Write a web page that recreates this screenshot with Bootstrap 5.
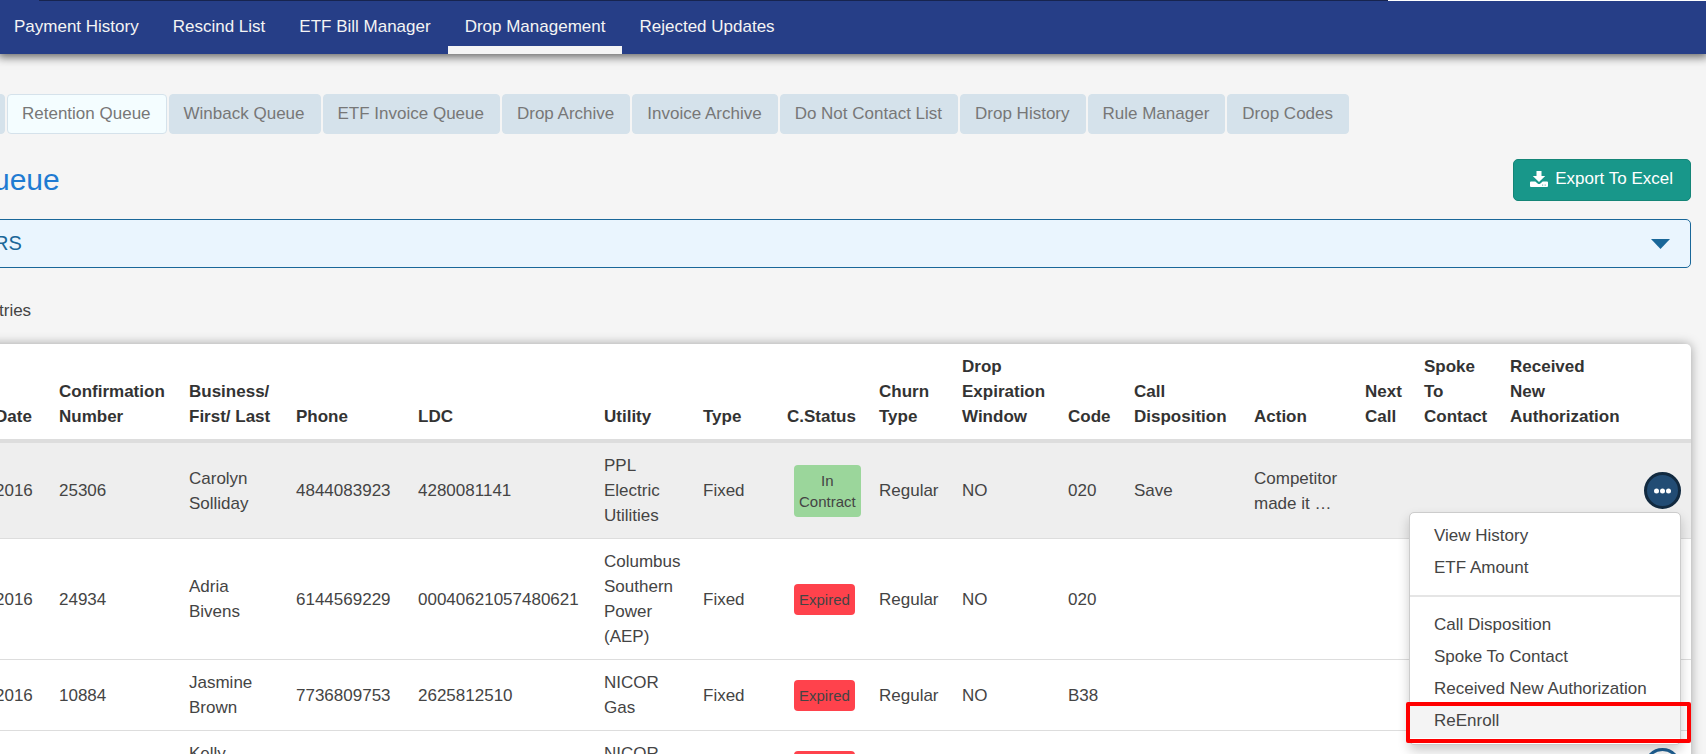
<!DOCTYPE html>
<html lang="en">
<head>
<meta charset="utf-8">
<meta name="viewport" content="width=device-width, initial-scale=1">
<title>Retention Queue</title>
<link href="https://cdn.jsdelivr.net/npm/bootstrap@5.3.0/dist/css/bootstrap.min.css" rel="stylesheet">
<style>
  body { font-family: "Liberation Sans", Arial, sans-serif; font-size: 17px; line-height: 25px; color: #444; background: #f5f5f5; height: 100vh; overflow: hidden; }
  .strip { height: 1px; background: linear-gradient(90deg, #263e87 39px, #17244f 39px, #17244f 1388px, #fff 1388px); }
  .topnav { background: #263e87; box-shadow: 0 1px 9px 2px rgba(0,0,0,.6); clip-path: inset(0 0 -20px 0); }
  .topnav .nav-link { color: #f4f4f4; padding: 13px 17px 7px; border-bottom: 8px solid transparent; }
  .topnav .nav-link.active { border-bottom-color: #f4f4f4; }
  .topnav .nav { margin-left: -3px; }
  .page { margin-left: -15px; padding: 40px 15px 0 0; }
  .subtabs { gap: 2px; }
  .subtabs .nav-link { color: #777; background: #d5e2eb; border: 1px solid #d5e2eb; border-radius: 4px; padding: 6px 15px 7px 14px; white-space: nowrap; }
  .subtabs .nav-link.active { background: #f4fdff; color: #777; border-color: #d5e2eb; }
  .subtabs .edge-tab { width: 20px; padding-left: 0; padding-right: 0; }
  .title-row { margin: 25px 0 18px; }
  .page-title { font-size: 30px; line-height: 36px; color: #1f7bd2; padding-left: 8px; }
  .btn-export { --bs-btn-color: #fff; --bs-btn-bg: #18978a; --bs-btn-border-color: #148577; --bs-btn-hover-color: #fff; --bs-btn-hover-bg: #14857a; font-size: 17px; line-height: 25px; gap: 7px; padding: 6px 17px 9px 16px; border-radius: 5px; }
  .filters { background: #eaf5fe; border: 1px solid #1a6799; border-radius: 5px; color: #1a6799; font-size: 20px; padding: 11px 20px 11px 8px; line-height: 25px; text-align: left; }
  .entries { padding-left: 14px; margin: 30px 0 21px; }
  .queue { background: #fff; border-radius: 5px; box-shadow: 0 0 11px rgba(0,0,0,.35); }
  .queue table { table-layout: fixed; --bs-table-bg: transparent; --bs-table-color: #444; color: #444; }
  .queue th, .queue td { padding: 10px; white-space: nowrap; }
  .queue th { vertical-align: bottom; color: #333; border-bottom: 4px solid #ddd; }
  .queue td { vertical-align: middle; border-bottom: 1px solid #ddd; }
  .queue tr.picked > td { background: #eee; }
  .status { display: inline-block; vertical-align: middle; margin-left: 7px; padding: 5px; border-radius: 4px; font-size: 15px; line-height: 21px; text-align: center; color: #444; }
  .status-in { background: #9bd69b; }
  .status-out { background: #ff424c; }
  .more { display: block; width: 37px; height: 37px; padding: 0; border: 3px solid #1f6296; border-radius: 50%; background: #fff; color: #1f6296; line-height: 0; }
  .more.open { background: #224c74; border-color: #122a40; color: #fff; }
  .rowmenu { top: 40px; right: 0; left: auto; width: 272px; padding: 6px 0; border: 1px solid #ccc; border-radius: 5px; font-size: 17px; color: #444; box-shadow: 0 6px 12px rgba(0,0,0,.2); }
  .rowmenu .dropdown-item { padding: 4px 24px 3px; line-height: 25px; color: #444; }
  .rowmenu .dropdown-divider { margin: 12px 0 11px; border-top: 2px solid #e5e5e5; opacity: 1; }
  .rowmenu .marked { background: #f4f4f4; padding-bottom: 5px; }
  .callout { inset: -2px -11px -5px -4px; border: 4px solid #f00; border-radius: 2px; pointer-events: none; }
</style>
</head>
<body>
<header>
  <div class="strip"></div>
  <div class="topnav position-relative">
    <nav class="nav flex-nowrap text-nowrap">
      <a class="nav-link" href="#">Payment History</a>
      <a class="nav-link" href="#">Rescind List</a>
      <a class="nav-link" href="#">ETF Bill Manager</a>
      <a class="nav-link active" href="#" aria-current="page">Drop Management</a>
      <a class="nav-link" href="#">Rejected Updates</a>
    </nav>
  </div>
</header>

<main class="page">
  <nav class="subtabs nav flex-nowrap">
    <a class="nav-link edge-tab" href="#"></a>
    <a class="nav-link active" href="#" aria-current="page">Retention Queue</a>
    <a class="nav-link" href="#">Winback Queue</a>
    <a class="nav-link" href="#">ETF Invoice Queue</a>
    <a class="nav-link" href="#">Drop Archive</a>
    <a class="nav-link" href="#">Invoice Archive</a>
    <a class="nav-link" href="#">Do Not Contact List</a>
    <a class="nav-link" href="#">Drop History</a>
    <a class="nav-link" href="#">Rule Manager</a>
    <a class="nav-link" href="#">Drop Codes</a>
  </nav>

  <div class="title-row d-flex justify-content-between align-items-center">
    <h1 class="page-title m-0 fw-normal">ueue</h1>
    <button type="button" class="btn btn-export d-flex align-items-center">
      <svg width="18" height="16" viewBox="0 0 18 16" aria-hidden="true"><path fill="#fff" d="M6.500 0h5v5h3.700L9 11 2.800 5h3.700zM1 10.500h4.300L7.600 12.600q1.400 1 2.800 0l2.300-2.100h4.300q1 0 1 1V15q0 1-1 1H1q-1 0-1-1v-3.500q0-1 1-1z"/><path fill="#7cc4bc" d="M12 13.500h1.200v1.200H12zM14.600 13.500h1.200v1.200h-1.200z"/></svg>
      <span>Export To Excel</span>
    </button>
  </div>

  <button type="button" class="filters w-100 d-flex justify-content-between align-items-center">
    <span>RS</span>
    <svg width="19" height="10" viewBox="0 0 19 10" aria-hidden="true"><path fill="#1a6799" d="M0 0h19L9.500 10z"/></svg>
  </button>

  <div class="entries">tries</div>

  <div class="queue">
    <table class="table mb-0">
      <colgroup>
        <col style="width:64px"><col style="width:130px"><col style="width:107px"><col style="width:122px"><col style="width:186px"><col style="width:99px"><col style="width:84px"><col style="width:92px"><col style="width:83px"><col style="width:106px"><col style="width:66px"><col style="width:120px"><col style="width:111px"><col style="width:59px"><col style="width:86px"><col style="width:125px"><col>
      </colgroup>
      <thead>
        <tr>
          <th>Date</th>
          <th>Confirmation<br>Number</th>
          <th>Business/<br>First/ Last</th>
          <th>Phone</th>
          <th>LDC</th>
          <th>Utility</th>
          <th>Type</th>
          <th>C.Status</th>
          <th>Churn<br>Type</th>
          <th>Drop<br>Expiration<br>Window</th>
          <th>Code</th>
          <th>Call<br>Disposition</th>
          <th>Action</th>
          <th>Next<br>Call</th>
          <th>Spoke<br>To<br>Contact</th>
          <th>Received<br>New<br>Authorization</th>
          <th></th>
        </tr>
      </thead>
      <tbody>
        <tr class="picked">
          <td>2016</td><td>25306</td><td>Carolyn<br>Solliday</td><td>4844083923</td><td>4280081141</td>
          <td>PPL<br>Electric<br>Utilities</td><td>Fixed</td><td><span class="status status-in">In<br>Contract</span></td>
          <td>Regular</td><td>NO</td><td>020</td><td>Save</td><td>Competitor<br>made it …</td><td></td><td></td><td></td>
          <td>
            <div class="dropdown d-flex justify-content-end">
              <button type="button" class="more open" aria-label="Row actions" aria-expanded="true"><svg width="19" height="6" viewBox="0 0 19 6" aria-hidden="true"><g fill="currentColor"><circle cx="3.500" cy="3" r="2.500"/><circle cx="9.500" cy="3" r="2.500"/><circle cx="15.500" cy="3" r="2.500"/></g></svg></button>
              <ul class="dropdown-menu rowmenu show">
                <li><a class="dropdown-item" href="#">View History</a></li>
                <li><a class="dropdown-item" href="#">ETF Amount</a></li>
                <li><hr class="dropdown-divider"></li>
                <li><a class="dropdown-item" href="#">Call Disposition</a></li>
                <li><a class="dropdown-item" href="#">Spoke To Contact</a></li>
                <li><a class="dropdown-item" href="#">Received New Authorization</a></li>
                <li class="position-relative"><a class="dropdown-item marked" href="#">ReEnroll</a><span class="callout position-absolute"></span></li>
              </ul>
            </div>
          </td>
        </tr>
        <tr>
          <td>2016</td><td>24934</td><td>Adria<br>Bivens</td><td>6144569229</td><td>00040621057480621</td>
          <td>Columbus<br>Southern<br>Power<br>(AEP)</td><td>Fixed</td><td><span class="status status-out">Expired</span></td>
          <td>Regular</td><td>NO</td><td>020</td><td></td><td></td><td></td><td></td><td></td>
          <td><button type="button" class="more ms-auto" aria-label="Row actions"></button></td>
        </tr>
        <tr>
          <td>2016</td><td>10884</td><td>Jasmine<br>Brown</td><td>7736809753</td><td>2625812510</td>
          <td>NICOR<br>Gas</td><td>Fixed</td><td><span class="status status-out">Expired</span></td>
          <td>Regular</td><td>NO</td><td>B38</td><td></td><td></td><td></td><td></td><td></td>
          <td><button type="button" class="more ms-auto" aria-label="Row actions"></button></td>
        </tr>
        <tr>
          <td></td><td></td><td>Kelly<br>&nbsp;</td><td></td><td></td>
          <td>NICOR<br>&nbsp;</td><td></td><td><span class="status status-out">Expired</span></td>
          <td></td><td></td><td></td><td></td><td></td><td></td><td></td><td></td>
          <td><button type="button" class="more ms-auto" aria-label="Row actions"></button></td>
        </tr>
      </tbody>
    </table>
  </div>
</main>
<script src="https://cdn.jsdelivr.net/npm/bootstrap@5.3.0/dist/js/bootstrap.bundle.min.js"></script>
</body>
</html>
